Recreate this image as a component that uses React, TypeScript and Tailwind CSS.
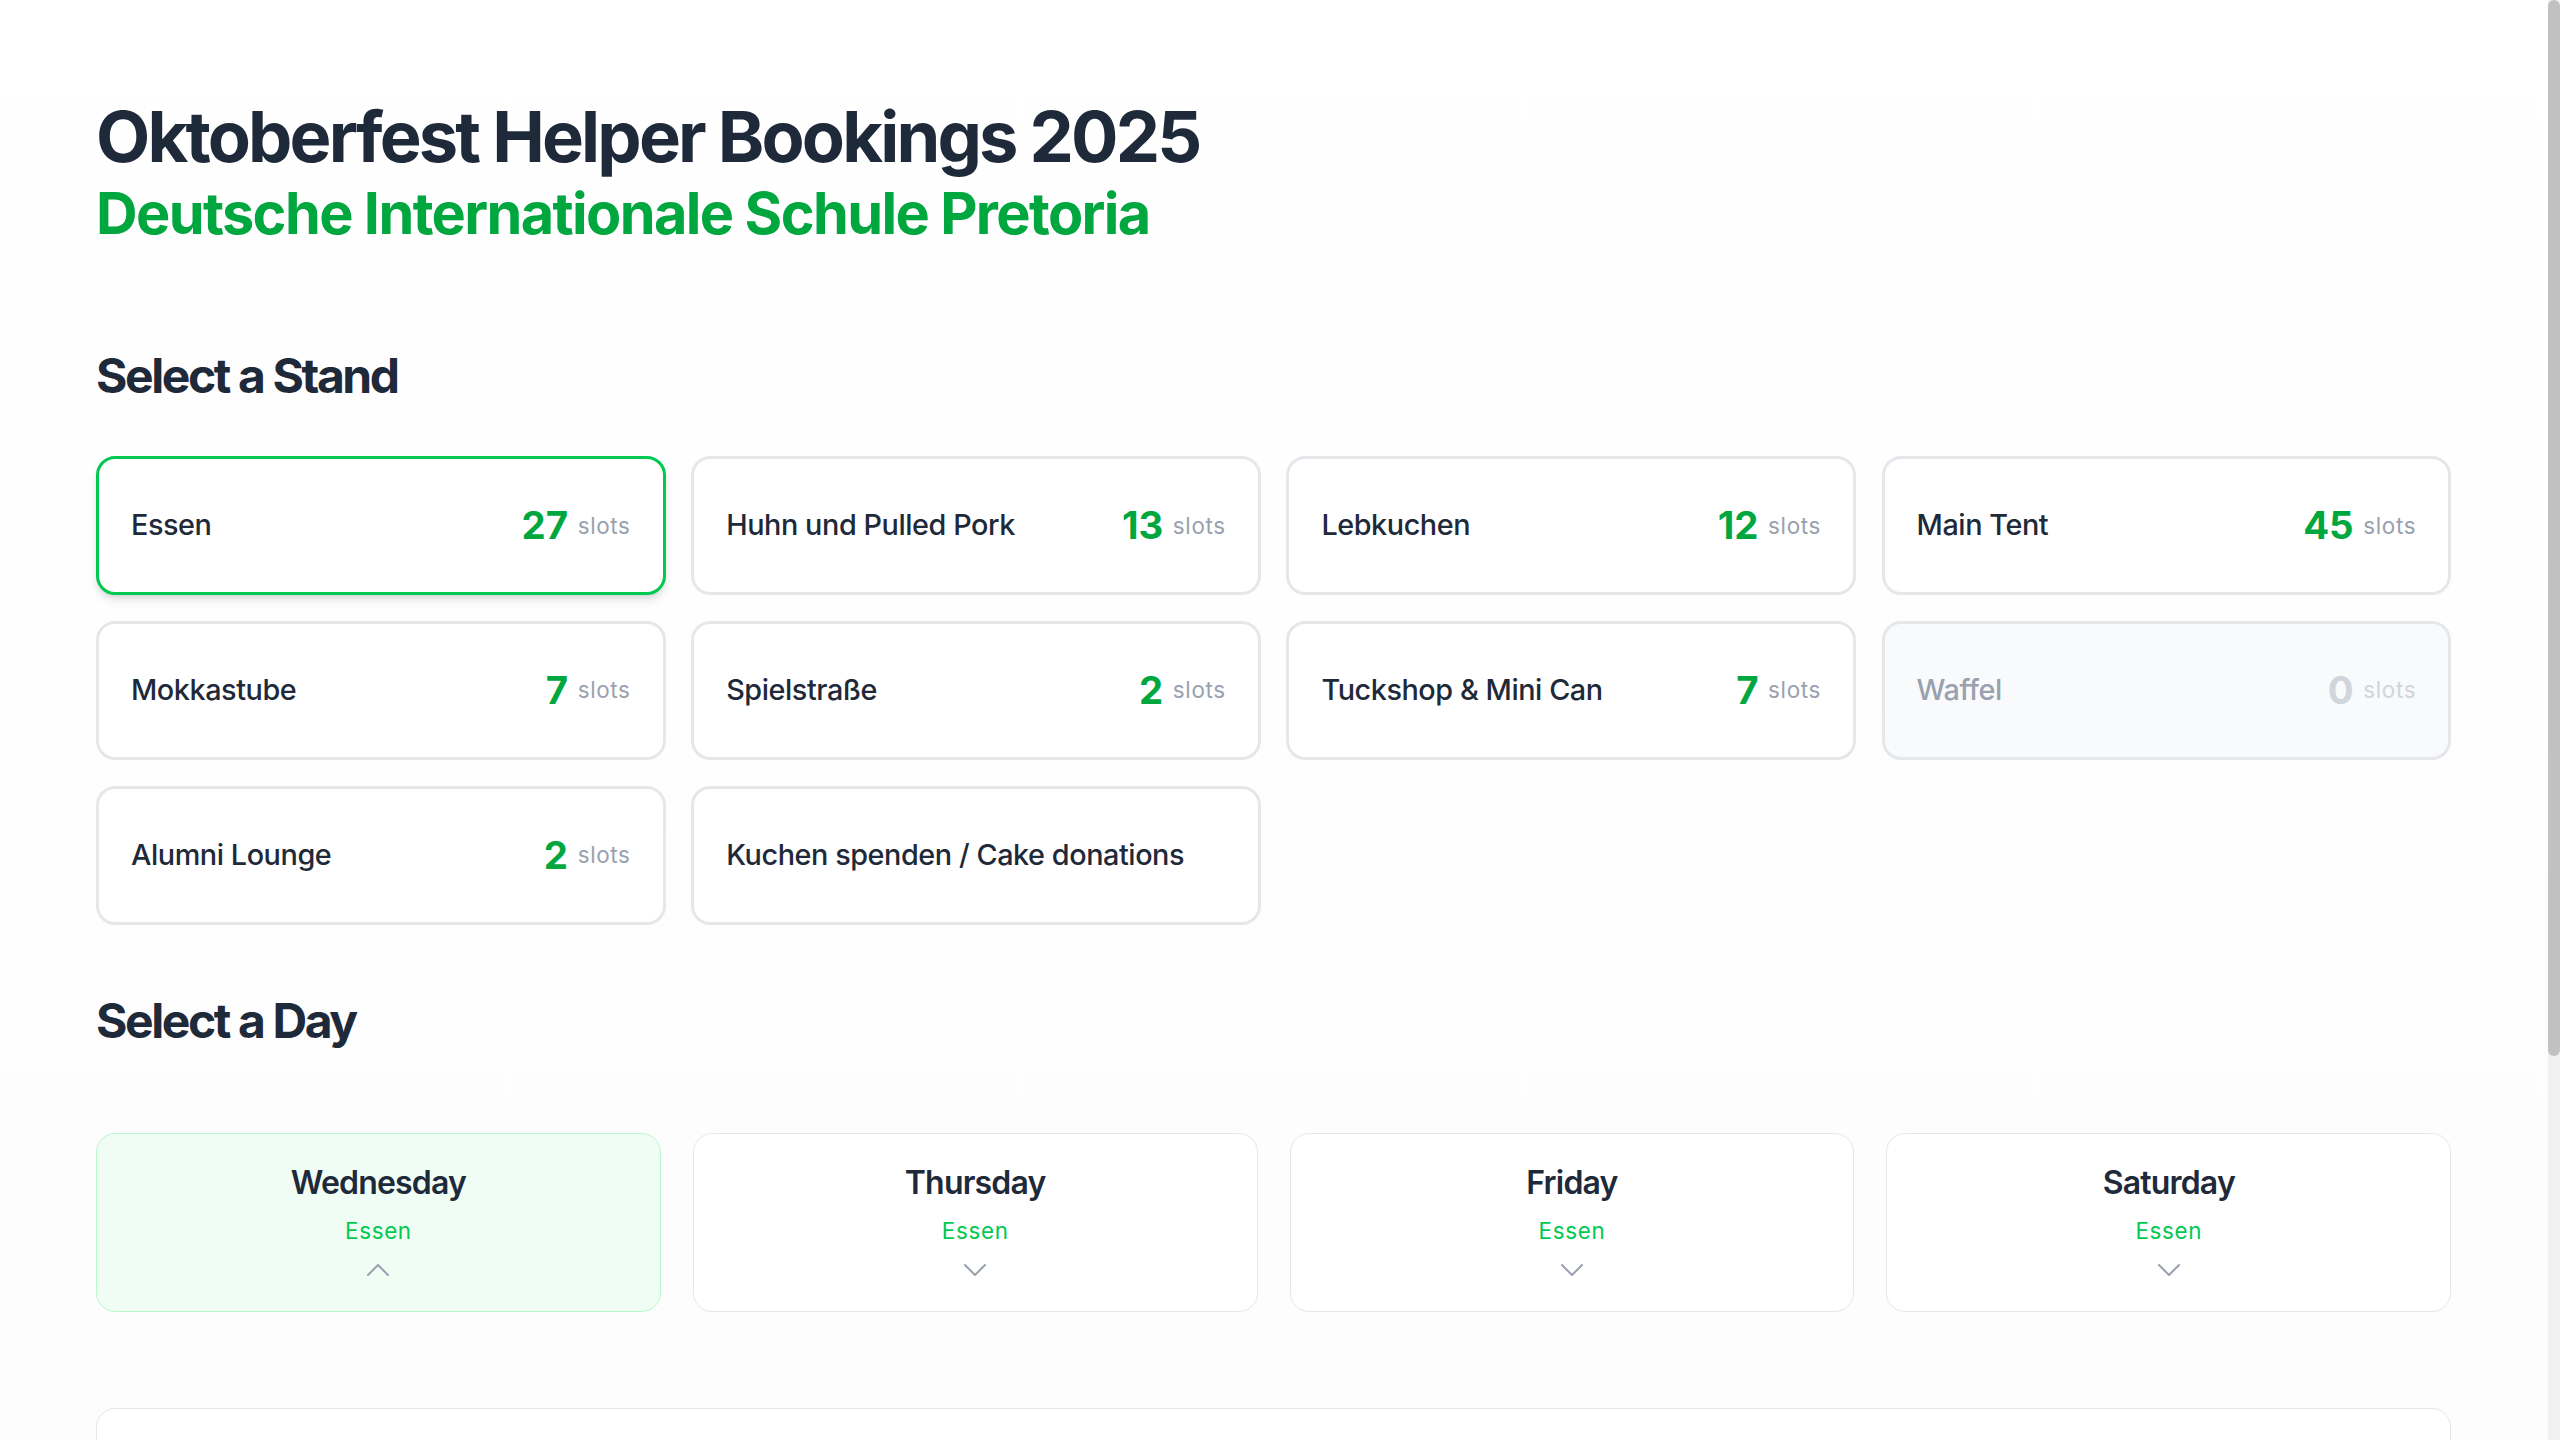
import React from "react";

type Stand = { name: string; slots: number | null; selected?: boolean; disabled?: boolean };

const stands: Stand[] = [
  { name: "Essen", slots: 27, selected: true },
  { name: "Huhn und Pulled Pork", slots: 13 },
  { name: "Lebkuchen", slots: 12 },
  { name: "Main Tent", slots: 45 },
  { name: "Mokkastube", slots: 7 },
  { name: "Spielstraße", slots: 2 },
  { name: "Tuckshop & Mini Can", slots: 7 },
  { name: "Waffel", slots: 0, disabled: true },
  { name: "Alumni Lounge", slots: 2 },
  { name: "Kuchen spenden / Cake donations", slots: null },
];

const days = [
  { name: "Wednesday", selected: true },
  { name: "Thursday" },
  { name: "Friday" },
  { name: "Saturday" },
];

function Chevron({ up }: { up?: boolean }) {
  return (
    <svg viewBox="0 0 24 24" fill="none" stroke="currentColor" strokeWidth={1.5} className="w-5 h-5 text-gray-400">
      {up ? (
        <path strokeLinecap="round" strokeLinejoin="round" d="m4.5 15.75 7.5-7.5 7.5 7.5" />
      ) : (
        <path strokeLinecap="round" strokeLinejoin="round" d="m19.5 8.25-7.5 7.5-7.5-7.5" />
      )}
    </svg>
  );
}

function StandCard({ s }: { s: Stand }) {
  const base = "flex items-center justify-between h-[87px] px-5 rounded-xl border-2 text-left";
  const style = s.selected
    ? "border-green-500 bg-white shadow-md"
    : s.disabled
    ? "border-gray-200 bg-gray-50"
    : "border-gray-200 bg-white";
  return (
    <div className={`${base} ${style}`}>
      <span className={`text-lg font-medium tracking-[-0.015em] ${s.disabled ? "text-gray-400" : "text-gray-800"}`}>
        {s.name}
      </span>
      {s.slots !== null && (
        <span className="flex items-center gap-1.5">
          <span className={`text-2xl font-bold ${s.disabled ? "text-gray-300" : "text-green-600"}`}>{s.slots}</span>
          <span className={`text-sm tracking-[0.03em] ${s.disabled ? "text-gray-300" : "text-gray-400"}`}>slots</span>
        </span>
      )}
    </div>
  );
}

export default function App() {
  return (
    <div className="min-h-screen bg-white">
      <div className="[zoom:1.6] bg-gradient-to-b from-white to-[#fcfcfc] font-['Inter',sans-serif] text-gray-800">
        <div className="pl-15 pr-[68px] pt-16 pb-16">
          <header>
            <h1 className="text-[44px] leading-none font-bold tracking-[-0.04em] text-gray-800">
              Oktoberfest Helper Bookings 2025
            </h1>
            <p className="mt-[5px] text-4xl font-bold tracking-[-0.028em] text-green-600">
              Deutsche Internationale Schule Pretoria
            </p>
          </header>

          <section className="mt-16">
            <h2 className="text-3xl font-bold tracking-tighter text-gray-800 mb-8">Select a Stand</h2>
            <div className="grid grid-cols-4 gap-4">
              {stands.map((s) => (
                <StandCard key={s.name} s={s} />
              ))}
            </div>
          </section>

          <section className="mt-[42px]">
            <h2 className="text-3xl font-bold tracking-tighter text-gray-800 mb-[52px]">Select a Day</h2>
            <div className="grid grid-cols-4 gap-5">
              {days.map((d) => (
                <div
                  key={d.name}
                  className={`flex flex-col items-center px-4 pt-[17px] pb-4 rounded-xl border ${
                    d.selected ? "bg-green-50 border-green-200" : "bg-white border-gray-200"
                  }`}
                >
                  <span className="text-xl font-semibold tracking-tight text-gray-800">{d.name}</span>
                  <span className="mt-1.5 text-sm tracking-[0.03em] text-green-500">Essen</span>
                  <span className="mt-1">
                    <Chevron up={d.selected} />
                  </span>
                </div>
              ))}
            </div>
          </section>

          <section className="mt-15 h-[283px] rounded-xl border border-gray-200 bg-white"></section>
        </div>
      </div>

      <div className="fixed top-0 right-0 h-screen w-3 bg-[#f1f1f1]">
        <div className="h-[1056px] w-full rounded-full bg-[#c1c1c1]"></div>
      </div>
    </div>
  );
}
